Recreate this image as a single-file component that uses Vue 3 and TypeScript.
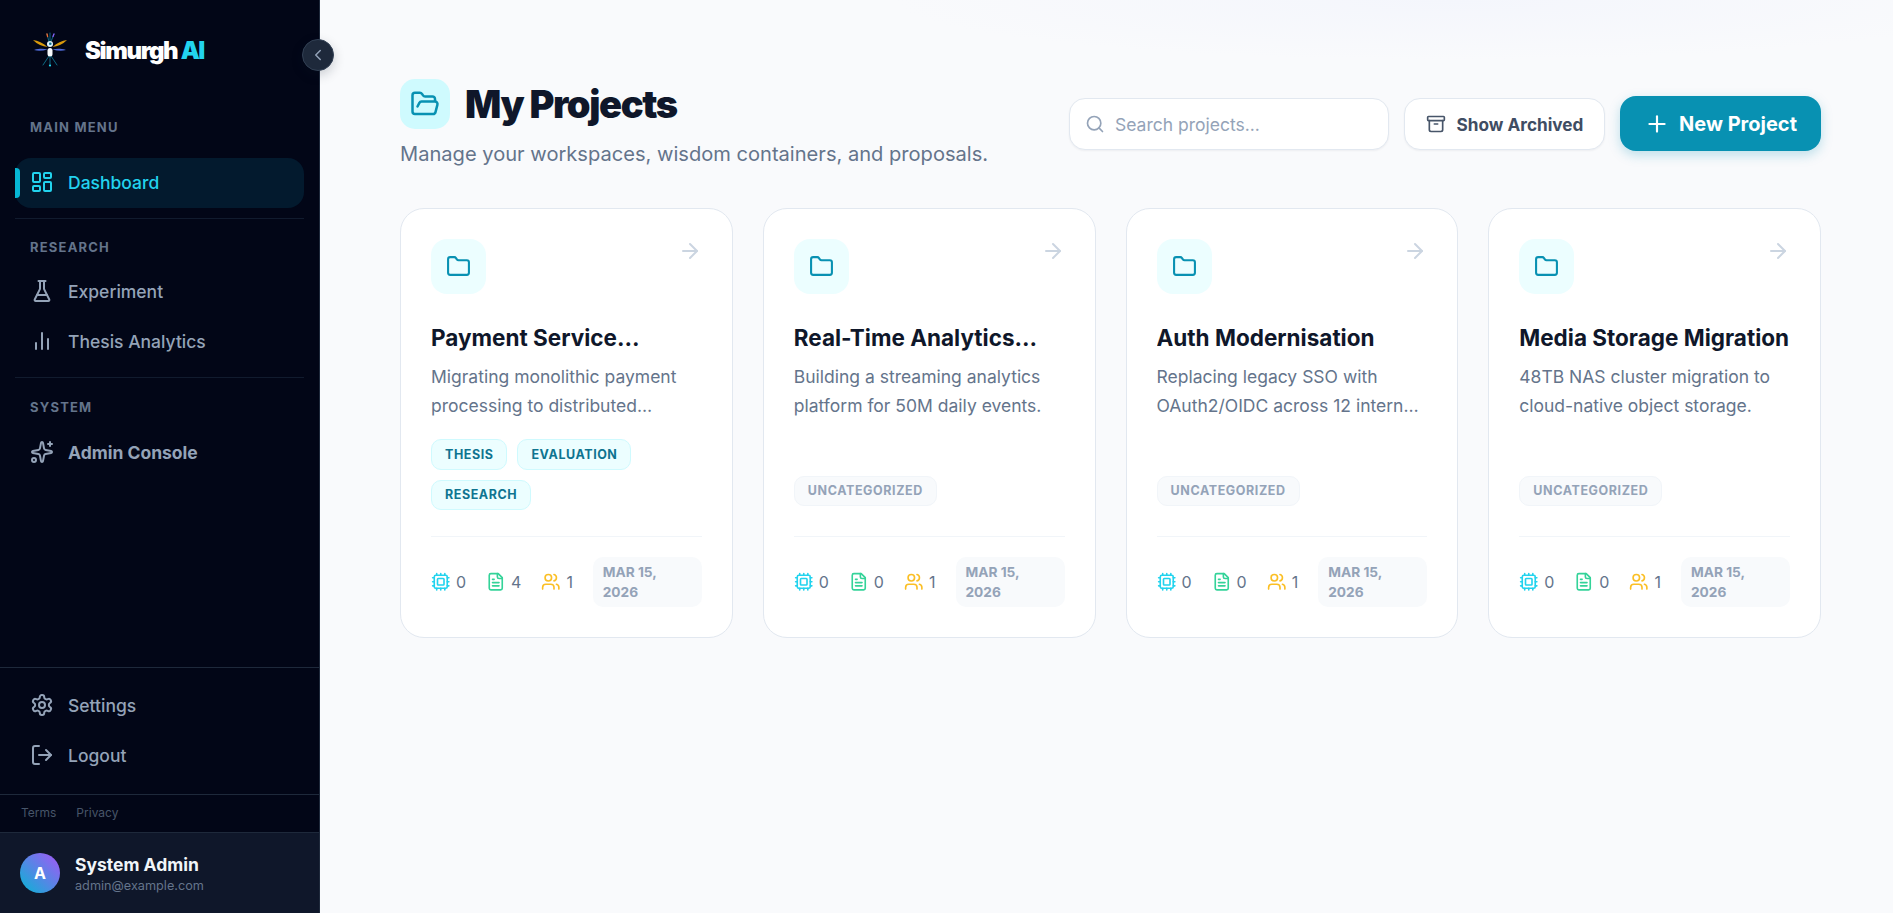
<script setup lang="ts">
interface Project {
  title: string;
  desc: string;
  tags: string[];
  chips: number;
  docs: number;
  members: number;
  date: string;
}

const icons: Record<string, string> = {
  dashboard: '<rect x="3" y="3" width="7" height="9" rx="1"/><rect x="14" y="3" width="7" height="5" rx="1"/><rect x="14" y="12" width="7" height="9" rx="1"/><rect x="3" y="16" width="7" height="5" rx="1"/>',
  flask: '<path d="M10 2v7.527a2 2 0 0 1-.211.896L4.72 20.55a1 1 0 0 0 .9 1.45h12.76a1 1 0 0 0 .9-1.45l-5.069-10.127A2 2 0 0 1 14 9.527V2"/><path d="M8.5 2h7"/><path d="M7 16h10"/>',
  bars: '<path d="M18 20V10"/><path d="M12 20V4"/><path d="M6 20v-6"/>',
  sparkles: '<path d="M11.017 2.814a1 1 0 0 1 1.966 0l1.051 5.558a2 2 0 0 0 1.594 1.594l5.558 1.051a1 1 0 0 1 0 1.966l-5.558 1.051a2 2 0 0 0-1.594 1.594l-1.051 5.558a1 1 0 0 1-1.966 0l-1.051-5.558a2 2 0 0 0-1.594-1.594l-5.558-1.051a1 1 0 0 1 0-1.966l5.558-1.051a2 2 0 0 0 1.594-1.594z"/><path d="M20 2v4"/><path d="M22 4h-4"/><circle cx="4" cy="20" r="2"/>',
  settings: '<path d="M12.22 2h-.44a2 2 0 0 0-2 2v.18a2 2 0 0 1-1 1.73l-.43.25a2 2 0 0 1-2 0l-.15-.08a2 2 0 0 0-2.73.73l-.22.38a2 2 0 0 0 .73 2.73l.15.1a2 2 0 0 1 1 1.72v.51a2 2 0 0 1-1 1.74l-.15.09a2 2 0 0 0-.73 2.73l.22.38a2 2 0 0 0 2.73.73l.15-.08a2 2 0 0 1 2 0l.43.25a2 2 0 0 1 1 1.73V20a2 2 0 0 0 2 2h.44a2 2 0 0 0 2-2v-.18a2 2 0 0 1 1-1.73l.43-.25a2 2 0 0 1 2 0l.15.08a2 2 0 0 0 2.73-.73l.22-.39a2 2 0 0 0-.73-2.73l-.15-.08a2 2 0 0 1-1-1.74v-.5a2 2 0 0 1 1-1.74l.15-.09a2 2 0 0 0 .73-2.73l-.22-.38a2 2 0 0 0-2.73-.73l-.15.08a2 2 0 0 1-2 0l-.43-.25a2 2 0 0 1-1-1.73V4a2 2 0 0 0-2-2z"/><circle cx="12" cy="12" r="3"/>',
  logout: '<path d="M9 21H5a2 2 0 0 1-2-2V5a2 2 0 0 1 2-2h4"/><path d="m16 17 5-5-5-5"/><path d="M21 12H9"/>',
  folderOpen: '<path d="m6 14 1.5-2.9A2 2 0 0 1 9.24 10H20a2 2 0 0 1 1.94 2.5l-1.54 6a2 2 0 0 1-1.95 1.5H4a2 2 0 0 1-2-2V5a2 2 0 0 1 2-2h3.9a2 2 0 0 1 1.69.9l.81 1.2a2 2 0 0 0 1.67.9H18a2 2 0 0 1 2 2v2"/>',
  folder: '<path d="M20 20a2 2 0 0 0 2-2V8a2 2 0 0 0-2-2h-7.9a2 2 0 0 1-1.69-.9L9.6 3.9A2 2 0 0 0 7.93 3H4a2 2 0 0 0-2 2v13a2 2 0 0 0 2 2Z"/>',
  search: '<circle cx="11" cy="11" r="8"/><path d="m21 21-4.3-4.3"/>',
  archive: '<rect x="2" y="3" width="20" height="5" rx="1"/><path d="M4 8v11a2 2 0 0 0 2 2h12a2 2 0 0 0 2-2V8"/><path d="M10 12h4"/>',
  plus: '<path d="M5 12h14"/><path d="M12 5v14"/>',
  arrow: '<path d="M5 12h14"/><path d="m12 5 7 7-7 7"/>',
  cpu: '<rect x="4" y="4" width="16" height="16" rx="2"/><rect x="8" y="8" width="8" height="8" rx="1"/><path d="M12 20v2"/><path d="M12 2v2"/><path d="M17 20v2"/><path d="M17 2v2"/><path d="M2 12h2"/><path d="M2 17h2"/><path d="M2 7h2"/><path d="M20 12h2"/><path d="M20 17h2"/><path d="M20 7h2"/><path d="M7 20v2"/><path d="M7 2v2"/>',
  file: '<path d="M15 2H6a2 2 0 0 0-2 2v16a2 2 0 0 0 2 2h12a2 2 0 0 0 2-2V7Z"/><path d="M14 2v4a2 2 0 0 0 2 2h4"/><path d="M10 9H8"/><path d="M16 13H8"/><path d="M16 17H8"/>',
  users: '<path d="M16 21v-2a4 4 0 0 0-4-4H6a4 4 0 0 0-4 4v2"/><circle cx="9" cy="7" r="4"/><path d="M22 21v-2a4 4 0 0 0-3-3.87"/><path d="M16 3.13a4 4 0 0 1 0 7.75"/>',
  chevron: '<path d="m15 18-6-6 6-6"/>',
};

const projects: Project[] = [
  {
    title: 'Payment Service Decomposition',
    desc: 'Migrating monolithic payment processing to distributed microservices with event sourcing.',
    tags: ['THESIS', 'EVALUATION', 'RESEARCH'],
    chips: 0,
    docs: 4,
    members: 1,
    date: 'Mar 15, 2026',
  },
  {
    title: 'Real-Time Analytics Platform',
    desc: 'Building a streaming analytics platform for 50M daily events.',
    tags: ['UNCATEGORIZED'],
    chips: 0,
    docs: 0,
    members: 1,
    date: 'Mar 15, 2026',
  },
  {
    title: 'Auth Modernisation',
    desc: 'Replacing legacy SSO with OAuth2/OIDC across 12 internal applications and services.',
    tags: ['UNCATEGORIZED'],
    chips: 0,
    docs: 0,
    members: 1,
    date: 'Mar 15, 2026',
  },
  {
    title: 'Media Storage Migration',
    desc: '48TB NAS cluster migration to cloud-native object storage.',
    tags: ['UNCATEGORIZED'],
    chips: 0,
    docs: 0,
    members: 1,
    date: 'Mar 15, 2026',
  },
];
</script>

<template>
  <div class="app">
    <aside class="sidebar">
      <div class="brand">
        <svg class="logo" viewBox="0 0 36 36" fill="none" stroke-linecap="round">
          <path d="M16.8 9 15 2M18 9V1M19.2 9 22 2" stroke="#0e7490" stroke-width="0.9" />
          <path d="M15.6 4.5 15 2" stroke="#ef6c2f" stroke-width="1.3" />
          <path d="M21 4.5 22 2" stroke="#8b5cf6" stroke-width="1.3" />
          <path d="M1 8C6 8.5 11 11 15.5 15 10.5 14.5 5.5 12.5 1 8Z" fill="#d99a0c" />
          <path d="M35 8C30 8.5 25 11 20.5 15 25.5 14.5 30.5 12.5 35 8Z" fill="#d99a0c" />
          <path d="M2 18C7 16.6 11 16.6 15.5 17.4 11 18.8 6 19.2 2 18Z" fill="#4f6bd8" />
          <path d="M34 18C29 16.6 25 16.6 20.5 17.4 25 18.8 30 19.2 34 18Z" fill="#4f6bd8" />
          <path d="M17 24 11 33M18 24V33.5M19 24 25 33" stroke="#0e7490" stroke-width="0.9" />
          <circle cx="18" cy="33.5" r="1.1" fill="#22d3ee" />
          <circle cx="18" cy="12" r="3" fill="#e0f2fe" />
          <circle cx="18.3" cy="11.8" r="1.3" fill="#0e7490" />
          <rect x="15.5" y="16" width="5" height="8.5" rx="2.5" fill="#f8fafc" />
        </svg>
        <span class="brand-name">Simurgh <em>AI</em></span>
      </div>
      <button class="collapse">
        <svg class="icon" viewBox="0 0 24 24" v-html="icons.chevron" />
      </button>

      <nav class="nav">
        <div class="nav-label first">MAIN MENU</div>
        <a class="nav-item active">
          <svg class="icon" viewBox="0 0 24 24" v-html="icons.dashboard" />
          <span>Dashboard</span>
        </a>
        <div class="nav-divider" />
        <div class="nav-label">RESEARCH</div>
        <a class="nav-item">
          <svg class="icon" viewBox="0 0 24 24" v-html="icons.flask" />
          <span>Experiment</span>
        </a>
        <a class="nav-item">
          <svg class="icon" viewBox="0 0 24 24" v-html="icons.bars" />
          <span>Thesis Analytics</span>
        </a>
        <div class="nav-divider" />
        <div class="nav-label sys">SYSTEM</div>
        <a class="nav-item strong">
          <svg class="icon" viewBox="0 0 24 24" v-html="icons.sparkles" />
          <span>Admin Console</span>
        </a>
      </nav>

      <div class="side-bottom">
        <a class="nav-item">
          <svg class="icon" viewBox="0 0 24 24" v-html="icons.settings" />
          <span>Settings</span>
        </a>
        <a class="nav-item">
          <svg class="icon" viewBox="0 0 24 24" v-html="icons.logout" />
          <span>Logout</span>
        </a>
      </div>
      <div class="legal">
        <span>Terms</span>
        <span>Privacy</span>
      </div>
      <div class="user">
        <div class="avatar">A</div>
        <div class="user-text">
          <div class="user-name">System Admin</div>
          <div class="user-mail">admin@example.com</div>
        </div>
      </div>
    </aside>

    <main class="main">
      <header class="head">
        <div>
          <div class="title-row">
            <div class="title-icon">
              <svg class="icon" viewBox="0 0 24 24" v-html="icons.folderOpen" />
            </div>
            <h1>My Projects</h1>
          </div>
          <p class="subtitle">Manage your workspaces, wisdom containers, and proposals.</p>
        </div>
        <div class="actions">
          <label class="search">
            <svg class="icon" viewBox="0 0 24 24" v-html="icons.search" />
            <input type="text" placeholder="Search projects..." />
          </label>
          <button class="btn-archived">
            <svg class="icon" viewBox="0 0 24 24" v-html="icons.archive" />
            Show Archived
          </button>
          <button class="btn-new">
            <svg class="icon" viewBox="0 0 24 24" v-html="icons.plus" />
            New Project
          </button>
        </div>
      </header>

      <section class="grid">
        <article v-for="p in projects" :key="p.title" class="card">
          <div class="card-top">
            <div class="card-icon">
              <svg class="icon" viewBox="0 0 24 24" v-html="icons.folder" />
            </div>
            <svg class="icon arrow" viewBox="0 0 24 24" v-html="icons.arrow" />
          </div>
          <h2>{{ p.title }}</h2>
          <p class="desc">{{ p.desc }}</p>
          <div class="tags">
            <span
              v-for="t in p.tags"
              :key="t"
              class="tag"
              :class="{ muted: t === 'UNCATEGORIZED' }"
            >{{ t }}</span>
          </div>
          <div class="stats">
            <span class="stat">
              <svg class="icon cyan" viewBox="0 0 24 24" v-html="icons.cpu" />{{ p.chips }}
            </span>
            <span class="stat">
              <svg class="icon green" viewBox="0 0 24 24" v-html="icons.file" />{{ p.docs }}
            </span>
            <span class="stat">
              <svg class="icon amber" viewBox="0 0 24 24" v-html="icons.users" />{{ p.members }}
            </span>
            <span class="date">{{ p.date }}</span>
          </div>
        </article>
      </section>
    </main>
  </div>
</template>

<style>
body {
  margin: 0;
  background: #f8fafc;
}
</style>

<style scoped>
.app {
  display: flex;
  height: 100vh;
  overflow: hidden;
  font-family: Inter, 'Liberation Sans', sans-serif;
  background: #f9fafc;
}

.icon {
  width: 24px;
  height: 24px;
  flex: none;
  fill: none;
  stroke: currentColor;
  stroke-width: 2;
  stroke-linecap: round;
  stroke-linejoin: round;
}

/* sidebar */
.sidebar {
  position: relative;
  width: 320px;
  flex: none;
  box-sizing: border-box;
  display: flex;
  flex-direction: column;
  background: #020617;
  border-right: 1px solid #1e293b;
  color: #94a3b8;
}

.brand {
  display: flex;
  align-items: center;
  gap: 17px;
  height: 100px;
  padding-left: 32px;
  box-sizing: border-box;
}

.logo {
  width: 36px;
  height: 36px;
}

.brand-name {
  font-size: 24px;
  font-weight: 900;
  letter-spacing: -1.4px;
  color: #fff;
}

.brand-name em {
  font-style: normal;
  color: #22d3ee;
}

.collapse {
  position: absolute;
  top: 39px;
  left: 302px;
  width: 32px;
  height: 32px;
  padding: 0;
  display: flex;
  align-items: center;
  justify-content: center;
  border: 1px solid #334155;
  border-radius: 50%;
  background: #1e293b;
  color: #94a3b8;
  box-shadow: 0 4px 12px rgba(15, 23, 42, 0.2);
}

.collapse .icon {
  width: 18px;
  height: 18px;
}

.nav {
  padding: 0 15px;
}

.nav-label {
  padding: 20px 15px 12px;
  font-size: 13px;
  font-weight: 700;
  line-height: 16px;
  letter-spacing: 1.2px;
  color: #64748b;
}

.nav-label.first {
  padding-top: 19px;
  padding-bottom: 23px;
}

.nav-label.sys {
  padding-top: 21px;
  padding-bottom: 13px;
}

.nav-item {
  position: relative;
  display: flex;
  align-items: center;
  gap: 14px;
  height: 50px;
  padding-left: 15px;
  padding-bottom: 2px;
  box-sizing: border-box;
  border-radius: 16px;
  font-size: 17.5px;
  font-weight: 500;
  color: #94a3b8;
}

.nav-item.active {
  color: #22d3ee;
  background: #031a2e;
}

.nav-item.active::before {
  content: '';
  position: absolute;
  left: 0;
  top: 10px;
  width: 5px;
  height: 30px;
  border-radius: 0 4px 4px 0;
  background: #06b6d4;
}

.nav-item.strong {
  font-weight: 700;
}

.nav-divider {
  height: 1px;
  margin-top: 10px;
  background: #111b2e;
}

.side-bottom {
  margin-top: auto;
  padding: 13px 15px;
  border-top: 1px solid #1e293b;
}

.legal {
  display: flex;
  gap: 20px;
  height: 38px;
  box-sizing: border-box;
  padding-bottom: 3px;
  align-items: center;
  padding-left: 21px;
  border-top: 1px solid #1e293b;
  font-size: 12px;
  color: #475569;
}

.user {
  display: flex;
  align-items: center;
  gap: 15px;
  height: 81px;
  box-sizing: border-box;
  padding-left: 20px;
  background: #0f172a;
  border-top: 1px solid #1e293b;
}

.avatar {
  width: 40px;
  height: 40px;
  border-radius: 50%;
  display: flex;
  align-items: center;
  justify-content: center;
  background: linear-gradient(45deg, #06b6d4, #a855f7);
  color: #fff;
  font-size: 16px;
  font-weight: 700;
}

.user-text {
  margin-top: 2px;
}

.user-name {
  font-size: 17.5px;
  font-weight: 700;
  line-height: 24px;
  color: #f1f5f9;
}

.user-mail {
  font-size: 12.7px;
  line-height: 18px;
  color: #64748b;
}

/* main */
.main {
  flex: 1;
  min-width: 0;
  box-sizing: border-box;
  padding: 79px 72px 0 80px;
  background: radial-gradient(ellipse 560px 60px at 72% 0, #f4f6fc, transparent);
}

.head {
  display: flex;
  justify-content: space-between;
  align-items: center;
  margin-bottom: 40px;
}

.title-row {
  display: flex;
  align-items: center;
  gap: 15px;
}

.title-icon {
  width: 50px;
  height: 50px;
  border-radius: 15px;
  display: flex;
  align-items: center;
  justify-content: center;
  background: #cffafe;
  color: #0891b2;
}

.title-icon .icon {
  width: 30px;
  height: 30px;
}

h1 {
  margin: 0;
  font-size: 38px;
  font-weight: 900;
  letter-spacing: -1.4px;
  color: #0f172a;
}

.subtitle {
  margin: 11px 0 0;
  font-size: 20.1px;
  line-height: 28px;
  color: #64748b;
}

.actions {
  display: flex;
  align-items: center;
  gap: 15px;
}

.search {
  display: flex;
  align-items: center;
  gap: 10px;
  width: 320px;
  height: 52px;
  box-sizing: border-box;
  padding-left: 15px;
  background: #fff;
  border: 1px solid #e2e8f0;
  border-radius: 16px;
  box-shadow: 0 1px 2px rgba(15, 23, 42, 0.05);
  color: #94a3b8;
}

.search .icon {
  width: 20px;
  height: 20px;
}

.search input {
  flex: 1;
  min-width: 0;
  padding: 2px 0 0;
  border: 0;
  outline: 0;
  background: none;
  font: inherit;
  font-size: 17.5px;
}

.search input::placeholder {
  color: #94a3b8;
}

.btn-archived,
.btn-new {
  display: flex;
  align-items: center;
  justify-content: center;
  font-family: inherit;
  cursor: pointer;
}

.btn-archived {
  gap: 11px;
  width: 201px;
  height: 52px;
  padding: 1px 0 0;
  background: #fff;
  border: 1px solid #e2e8f0;
  border-radius: 16px;
  box-shadow: 0 1px 2px rgba(15, 23, 42, 0.05);
  font-size: 17.2px;
  font-weight: 700;
  color: #3f4d63;
}

.btn-archived .icon {
  width: 20px;
  height: 20px;
  color: #475569;
}

.btn-new {
  gap: 9px;
  width: 201px;
  height: 55px;
  padding: 0;
  border: 0;
  border-radius: 16px;
  background: #0891b2;
  box-shadow: 0 4px 12px rgba(8, 145, 178, 0.25);
  font-size: 20px;
  font-weight: 700;
  color: #fff;
}

.btn-new .icon {
  width: 26px;
  height: 26px;
}

/* cards */
.grid {
  display: grid;
  grid-template-columns: repeat(4, minmax(0, 1fr));
  gap: 30px;
}

.card {
  display: flex;
  flex-direction: column;
  min-width: 0;
  padding: 30px;
  background: #fff;
  border: 1px solid #e2e8f0;
  border-radius: 24px;
}

.card-top {
  display: flex;
  justify-content: space-between;
  align-items: flex-start;
}

.card-icon {
  width: 55px;
  height: 55px;
  border-radius: 16px;
  display: flex;
  align-items: center;
  justify-content: center;
  background: #ecfeff;
  color: #0891b2;
}

.card-icon .icon {
  width: 25px;
  height: 25px;
}

.arrow {
  color: #cbd5e1;
}

h2 {
  margin: 29px 0 0;
  font-size: 22.5px;
  font-weight: 700;
  line-height: 30px;
  color: #0f172a;
  display: -webkit-box;
  -webkit-line-clamp: 1;
  -webkit-box-orient: vertical;
  overflow: hidden;
}

.desc {
  margin: 9px 0 0;
  font-size: 17.5px;
  line-height: 29px;
  color: #64748b;
  display: -webkit-box;
  -webkit-line-clamp: 2;
  -webkit-box-orient: vertical;
  overflow: hidden;
  min-height: 58px;
}

.tags {
  display: flex;
  flex-wrap: wrap;
  align-content: flex-end;
  gap: 10px;
  margin-top: 19px;
  flex: 1;
}

.tag {
  height: 30.6px;
  box-sizing: border-box;
  padding: 0 13px;
  display: flex;
  align-items: center;
  border-radius: 10px;
  border: 1px solid #cffafe;
  background: #ecfeff;
  font-size: 12.5px;
  font-weight: 700;
  letter-spacing: 0.55px;
  color: #0e7490;
}

.tag.muted {
  margin-bottom: 4px;
  background: #f8fafc;
  border-color: #f1f5f9;
  letter-spacing: 0.6px;
  color: #94a3b8;
}

.stats {
  display: flex;
  align-items: center;
  margin-top: 26px;
  padding-top: 20px;
  border-top: 1px solid #f1f5f9;
  font-size: 16px;
  color: #64748b;
}

.stat {
  display: flex;
  align-items: center;
  gap: 5.5px;
  margin-right: 20px;
}

.stat:nth-child(3) {
  margin-right: 0;
}

.stat .icon {
  width: 19.5px;
  height: 19.5px;
}

.cyan {
  color: #22d3ee;
}

.green {
  color: #34d399;
}

.amber {
  color: #fbbf24;
}

.date {
  margin-left: auto;
  flex: none;
  width: 109px;
  box-sizing: border-box;
  padding: 5px 10px;
  border-radius: 10px;
  background: #f8fafc;
  font-size: 13.7px;
  font-weight: 700;
  line-height: 20px;
  text-transform: uppercase;
  color: #94a3b8;
}
</style>
